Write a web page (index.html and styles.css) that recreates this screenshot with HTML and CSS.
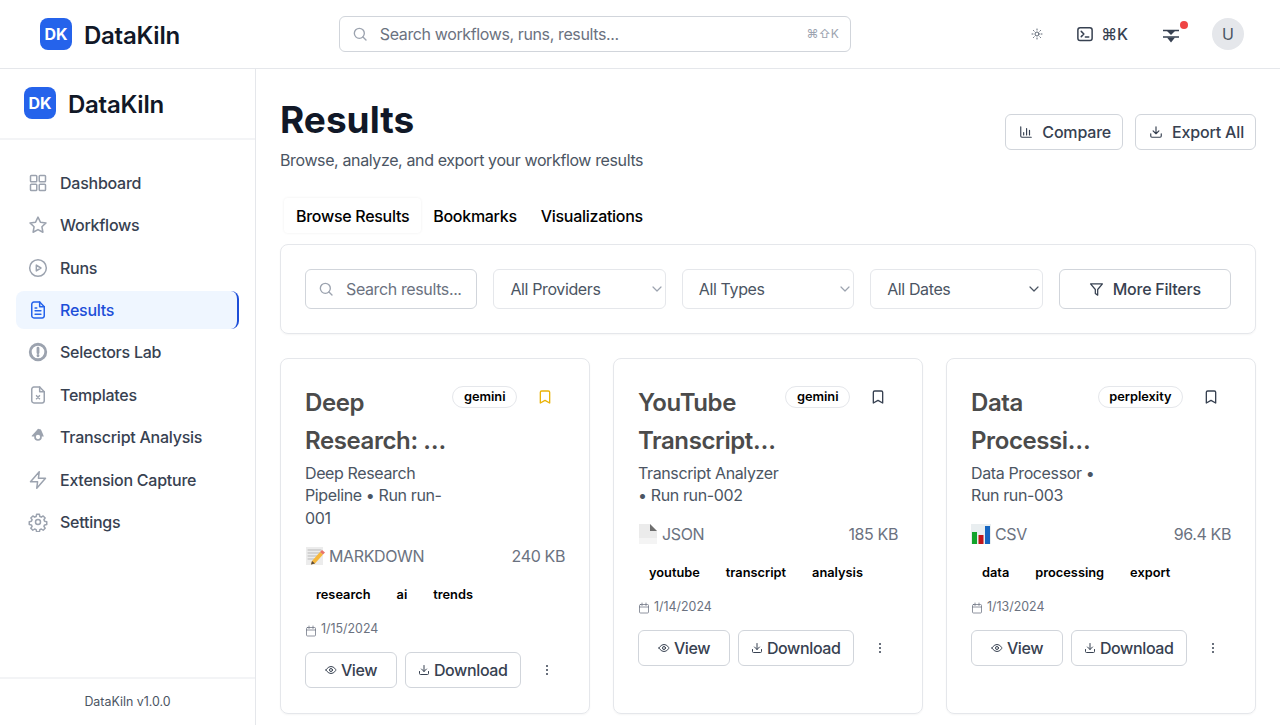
FILE: index.html
```html
<!DOCTYPE html>
<html lang="en">
<head>
<meta charset="utf-8">
<title>DataKiln Results</title>
<link rel="stylesheet" href="styles.css">
</head>
<body>
<header class="topbar">
  <div class="brand topbar-brand"><span class="logo">DK</span><span class="brand-name">DataKiln</span></div>
  <div class="global-search">
    <svg class="ico16 search-ico" viewBox="0 0 24 24"><circle cx="11" cy="11" r="7.5"/><path d="M21 21l-4.6-4.6"/></svg>
    <span class="global-placeholder">Search workflows, runs, results...</span>
    <span class="kbd">⌘⇧K</span>
  </div>
  <div class="top-actions">
    <button class="icon-btn sun" aria-label="Theme">
      <svg viewBox="0 0 24 24" class="ico12"><circle cx="12" cy="12" r="4"/><path d="M12 2v2M12 20v2M4.9 4.9l1.4 1.4M17.7 17.7l1.4 1.4M2 12h2M20 12h2M4.9 19.1l1.4-1.4M17.7 6.3l1.4-1.4"/></svg>
    </button>
    <button class="cmd-btn" aria-label="Command">
      <svg viewBox="0 0 24 24" class="ico18"><rect x="2.5" y="3.5" width="19" height="17" rx="3"/><path d="M7 8.5l3.5 3.5L7 15.5M12.5 16H17"/></svg>
      <span>⌘K</span>
    </button>
    <button class="icon-btn notif" aria-label="Notifications">
      <svg viewBox="0 0 16 14" class="notif-ico"><path class="notif-line" d="M0 1.5h16M0 8h16"/><path class="notif-fill" d="M4 2h8L8 6zM4 8.500h8L8 13.500z"/></svg>
      <span class="dot"></span>
    </button>
    <span class="avatar">U</span>
  </div>
</header>

<div class="shell">
  <aside class="sidebar">
    <div class="brand side-brand"><span class="logo">DK</span><span class="brand-name">DataKiln</span></div>
    <nav class="nav">
      <a class="nav-item"><svg class="nav-ico" viewBox="0 0 24 24"><rect x="3" y="3" width="7.5" height="7.5" rx="1"/><rect x="13.5" y="3" width="7.5" height="7.5" rx="1"/><rect x="3" y="13.5" width="7.5" height="7.5" rx="1"/><rect x="13.5" y="13.5" width="7.5" height="7.5" rx="1"/></svg>Dashboard</a>
      <a class="nav-item"><svg class="nav-ico" viewBox="0 0 24 24"><path d="M12 2.500l2.900 6.100 6.700.9-4.900 4.600 1.200 6.600-5.900-3.200-5.900 3.200 1.200-6.600-4.900-4.600 6.700-.9z"/></svg>Workflows</a>
      <a class="nav-item"><svg class="nav-ico" viewBox="0 0 24 24"><circle cx="12" cy="12" r="10"/><path d="M10 8.500l5.500 3.500-5.500 3.500z"/></svg>Runs</a>
      <a class="nav-item active"><svg class="nav-ico" viewBox="0 0 24 24"><path d="M14 2.500H7a2.500 2.500 0 0 0-2.500 2.500v14A2.500 2.500 0 0 0 7 21.500h10a2.500 2.500 0 0 0 2.500-2.500V8z"/><path d="M14 2.500V8h5.500M8.500 9.500h2M8.500 13h7M8.500 17h7"/></svg>Results</a>
      <a class="nav-item"><svg class="nav-ico heavy" viewBox="0 0 24 24"><circle cx="12" cy="12" r="9.300"/><path d="M12 7.500v5.500M12 16.200v.4"/></svg>Selectors Lab</a>
      <a class="nav-item"><svg class="nav-ico" viewBox="0 0 24 24"><path d="M14 2.500H7a2.500 2.500 0 0 0-2.500 2.500v14A2.500 2.500 0 0 0 7 21.500h10a2.500 2.500 0 0 0 2.500-2.500V8z"/><path d="M14 2.500V8h5.500M10.200 12.800l3.600 3.600M13.800 12.800l-3.600 3.600"/></svg>Templates</a>
      <a class="nav-item"><svg class="nav-ico blob" viewBox="0 0 24 24"><path class="blob-top" d="M4.500 10.500L10 4.500 12 2l3.500 1L17.500 7.500l1.500 4H4.500z"/><circle cx="12" cy="12" r="3.600"/></svg>Transcript Analysis</a>
      <a class="nav-item"><svg class="nav-ico" viewBox="0 0 24 24"><path d="M13.500 2L3 14h8.500l-1 8L21 10h-8.500z"/></svg>Extension Capture</a>
      <a class="nav-item"><svg class="nav-ico" viewBox="0 0 24 24"><circle cx="12" cy="12" r="3"/><path d="M10.300 2.800h3.400l.5 2.600 1.800.8 2.200-1.500 2.400 2.400-1.500 2.200.8 1.800 2.600.5v3.400l-2.600.5-.8 1.800 1.500 2.200-2.400 2.400-2.200-1.500-1.800.8-.5 2.600h-3.400l-.5-2.600-1.800-.8-2.200 1.500-2.400-2.400 1.500-2.200-.8-1.800-2.600-.5v-3.400l2.600-.5.8-1.800-1.500-2.200 2.400-2.400 2.200 1.500 1.800-.8z"/></svg>Settings</a>
    </nav>
    <div class="side-foot">DataKiln v1.0.0</div>
  </aside>

  <main class="main">
    <div class="page-head">
      <div>
        <h1 class="page-title">Results</h1>
        <p class="page-sub">Browse, analyze, and export your workflow results</p>
      </div>
      <div class="page-actions">
        <button class="btn btn-head"><svg class="ico14" viewBox="0 0 24 24"><path d="M3 3v16a2 2 0 0 0 2 2h16M8 17v-4M13 17V6M18 17V9"/></svg>Compare</button>
        <button class="btn btn-head"><svg class="ico14" viewBox="0 0 24 24"><path d="M21 15v4a2 2 0 0 1-2 2H5a2 2 0 0 1-2-2v-4M7 10l5 5 5-5M12 15V3"/></svg>Export All</button>
      </div>
    </div>

    <div class="tabs">
      <span class="tab tab-on">Browse Results</span>
      <span class="tab">Bookmarks</span>
      <span class="tab">Visualizations</span>
    </div>

    <section class="filters">
      <div class="filter-search">
        <svg class="ico16 search-ico" viewBox="0 0 24 24"><circle cx="11" cy="11" r="7.5"/><path d="M21 21l-4.6-4.6"/></svg>
        <span class="filter-placeholder">Search results...</span>
      </div>
      <div class="select"><span>All Providers</span><svg class="chev" viewBox="0 0 10 6"><path d="M1 1l4 4 4-4"/></svg></div>
      <div class="select"><span>All Types</span><svg class="chev" viewBox="0 0 10 6"><path d="M1 1l4 4 4-4"/></svg></div>
      <div class="select"><span>All Dates</span><svg class="chev chev-dark" viewBox="0 0 10 6"><path d="M1 1l4 4 4-4"/></svg></div>
      <button class="btn btn-filter"><svg class="ico15" viewBox="0 0 24 24"><path d="M21.5 3h-19l7.600 9v6.500l3.800 2.500v-9z"/></svg>More Filters</button>
    </section>

    <section class="cards">
      <article class="card">
        <div class="card-head">
          <div class="card-info">
            <h2 class="card-title">Deep Research: …</h2>
            <p class="card-desc">Deep Research Pipeline • Run run-001</p>
          </div>
          <div class="card-side">
            <span class="pill">gemini</span>
            <button class="mark mark-on" aria-label="Bookmark"><svg viewBox="0 0 24 24" class="ico16"><path d="M19 21l-7-4-7 4V5a2 2 0 0 1 2-2h10a2 2 0 0 1 2 2z"/></svg></button>
          </div>
        </div>
        <div class="meta">
          <span class="meta-type"><svg class="emoji" viewBox="0 0 20 20"><rect x="1" y="1" width="17" height="18" fill="#ececec"/><path d="M3 4h13M3 7h13M3 10h10M3 13h7" stroke="#b9b9b9" stroke-width="1" fill="none"/><path d="M7 15L15 6l3 2.500-8 9-4 1z" fill="#f6b73c"/><path d="M15 6l2-2 3 2.500-2 2z" fill="#e8746a"/><path d="M7 15l-1 3.500 4-1z" fill="#5b4a3a"/></svg>MARKDOWN</span>
          <span>240 KB</span>
        </div>
        <div class="tags"><span class="tag">research</span><span class="tag">ai</span><span class="tag">trends</span></div>
        <div class="date"><svg class="ico12" viewBox="0 0 24 24"><rect x="3" y="5" width="18" height="17" rx="2"/><path d="M8 2v5M16 2v5M3 10h18"/></svg>1/15/2024</div>
        <div class="card-actions">
          <button class="btn btn-view"><svg class="ico12" viewBox="0 0 24 24"><path d="M2 12s3.600-7 10-7 10 7 10 7-3.600 7-10 7-10-7-10-7z"/><circle cx="12" cy="12" r="3"/></svg>View</button>
          <button class="btn btn-dl"><svg class="ico12" viewBox="0 0 24 24"><path d="M21 15v4a2 2 0 0 1-2 2H5a2 2 0 0 1-2-2v-4M7 10l5 5 5-5M12 15V3"/></svg>Download</button>
          <button class="kebab" aria-label="More"><svg viewBox="0 0 4 12" class="kebab-ico"><circle cx="2" cy="2" r="1"/><circle cx="2" cy="6" r="1"/><circle cx="2" cy="10" r="1"/></svg></button>
        </div>
      </article>

      <article class="card">
        <div class="card-head">
          <div class="card-info">
            <h2 class="card-title">YouTube Transcript…</h2>
            <p class="card-desc">Transcript Analyzer • Run run-002</p>
          </div>
          <div class="card-side">
            <span class="pill">gemini</span>
            <button class="mark" aria-label="Bookmark"><svg viewBox="0 0 24 24" class="ico16"><path d="M19 21l-7-4-7 4V5a2 2 0 0 1 2-2h10a2 2 0 0 1 2 2z"/></svg></button>
          </div>
        </div>
        <div class="meta">
          <span class="meta-type"><svg class="emoji" viewBox="0 0 20 20"><path d="M1 0h11l7 7v13H1z" fill="#ebebeb"/><path d="M12 0l7 7h-7z" fill="#6f6f6f"/><path d="M1 14h18v6H1z" fill="#f4f4f4"/></svg>JSON</span>
          <span>185 KB</span>
        </div>
        <div class="tags"><span class="tag">youtube</span><span class="tag">transcript</span><span class="tag">analysis</span></div>
        <div class="date"><svg class="ico12" viewBox="0 0 24 24"><rect x="3" y="5" width="18" height="17" rx="2"/><path d="M8 2v5M16 2v5M3 10h18"/></svg>1/14/2024</div>
        <div class="card-actions">
          <button class="btn btn-view"><svg class="ico12" viewBox="0 0 24 24"><path d="M2 12s3.600-7 10-7 10 7 10 7-3.600 7-10 7-10-7-10-7z"/><circle cx="12" cy="12" r="3"/></svg>View</button>
          <button class="btn btn-dl"><svg class="ico12" viewBox="0 0 24 24"><path d="M21 15v4a2 2 0 0 1-2 2H5a2 2 0 0 1-2-2v-4M7 10l5 5 5-5M12 15V3"/></svg>Download</button>
          <button class="kebab" aria-label="More"><svg viewBox="0 0 4 12" class="kebab-ico"><circle cx="2" cy="2" r="1"/><circle cx="2" cy="6" r="1"/><circle cx="2" cy="10" r="1"/></svg></button>
        </div>
      </article>

      <article class="card">
        <div class="card-head">
          <div class="card-info">
            <h2 class="card-title">Data Processi…</h2>
            <p class="card-desc">Data Processor • Run run-003</p>
          </div>
          <div class="card-side">
            <span class="pill">perplexity</span>
            <button class="mark" aria-label="Bookmark"><svg viewBox="0 0 24 24" class="ico16"><path d="M19 21l-7-4-7 4V5a2 2 0 0 1 2-2h10a2 2 0 0 1 2 2z"/></svg></button>
          </div>
        </div>
        <div class="meta">
          <span class="meta-type"><svg class="emoji" viewBox="0 0 20 20"><rect x="0" y="0" width="20" height="20" fill="#e9eef0"/><rect x="1" y="8" width="5" height="12" fill="#12a32b"/><rect x="7.5" y="11" width="5" height="9" fill="#c0141a"/><rect x="14" y="2" width="5" height="18" fill="#1565c0"/></svg>CSV</span>
          <span>96.4 KB</span>
        </div>
        <div class="tags"><span class="tag">data</span><span class="tag">processing</span><span class="tag">export</span></div>
        <div class="date"><svg class="ico12" viewBox="0 0 24 24"><rect x="3" y="5" width="18" height="17" rx="2"/><path d="M8 2v5M16 2v5M3 10h18"/></svg>1/13/2024</div>
        <div class="card-actions">
          <button class="btn btn-view"><svg class="ico12" viewBox="0 0 24 24"><path d="M2 12s3.600-7 10-7 10 7 10 7-3.600 7-10 7-10-7-10-7z"/><circle cx="12" cy="12" r="3"/></svg>View</button>
          <button class="btn btn-dl"><svg class="ico12" viewBox="0 0 24 24"><path d="M21 15v4a2 2 0 0 1-2 2H5a2 2 0 0 1-2-2v-4M7 10l5 5 5-5M12 15V3"/></svg>Download</button>
          <button class="kebab" aria-label="More"><svg viewBox="0 0 4 12" class="kebab-ico"><circle cx="2" cy="2" r="1"/><circle cx="2" cy="6" r="1"/><circle cx="2" cy="10" r="1"/></svg></button>
        </div>
      </article>
    </section>
  </main>
</div>
</body>
</html>
```
FILE: styles.css
```css
* { box-sizing: border-box; }
html, body { height: 100%; }
body {
  margin: 0;
  height: 725px;
  overflow: hidden;
  background: #fff;
  color: #374151;
  font-family: Inter, "Liberation Sans", "DejaVu Sans", sans-serif;
  font-size: 16px;
  line-height: 24px;
  letter-spacing: -0.38px;
}
svg { fill: none; stroke: currentColor; stroke-width: 2; stroke-linecap: round; stroke-linejoin: round; flex: none; display: block; }
button { font: inherit; letter-spacing: inherit; color: inherit; background: none; border: 0; padding: 0; cursor: pointer; }
h1, h2, p { margin: 0; }

.ico12 { width: 12px; height: 12px; }
.ico14 { width: 14px; height: 14px; }
.ico15 { width: 15px; height: 15px; }
.ico16 { width: 16px; height: 16px; }
.ico18 { width: 18px; height: 18px; }

.topbar {
  height: 69px;
  border-bottom: 1px solid #e5e7eb;
  display: flex;
  align-items: center;
  padding: 0 36px 0 40px;
}
.brand { display: flex; align-items: center; gap: 12px; }
.logo {
  width: 32px; height: 32px;
  background: #2563eb;
  color: #fff;
  border-radius: 8px;
  display: flex; align-items: center; justify-content: center;
  font-weight: 700;
  font-size: 16px;
  letter-spacing: -0.1px;
}
.brand-name { font-size: 24px; font-weight: 600; color: #111827; line-height: 32px; padding-top: 4px; letter-spacing: -0.25px; }
.global-search {
  width: 512px;
  height: 36px;
  margin-left: 159px;
  border: 1px solid #d1d5db;
  border-radius: 6px;
  display: flex;
  align-items: center;
  padding: 0 11px 0 12px;
  gap: 12px;
}
.search-ico { color: #9ca3af; }
.global-placeholder { flex: 1; color: #6b7280; }
.kbd { font-size: 12px; color: #9ca3af; letter-spacing: 0; }
.top-actions { margin-left: auto; display: flex; align-items: center; }
.icon-btn { display: flex; align-items: center; justify-content: center; position: relative; }
.sun { width: 36px; height: 36px; color: #4b5563; margin-right: 21px; }
.sun svg { stroke-width: 1.8; }
.cmd-btn { display: flex; align-items: center; gap: 7px; font-weight: 500; color: #374151; margin-right: 34px; letter-spacing: 0; }
.notif { width: 18px; height: 24px; margin-right: 32px; }
.notif-ico { width: 16px; height: 14px; margin-top: 3px; }
.notif-line { stroke: #374151; stroke-width: 1.5; stroke-linecap: butt; }
.notif-fill { fill: #374151; stroke: none; }
.dot { position: absolute; top: -1px; right: -8px; width: 8px; height: 8px; background: #ef4444; border-radius: 50%; }
.avatar { width: 32px; height: 32px; border-radius: 50%; background: #e5e7eb; color: #4b5563; display: flex; align-items: center; justify-content: center; letter-spacing: 0; }

.shell { display: flex; height: 656px; }
.sidebar {
  width: 256px;
  border-right: 1px solid #e5e7eb;
  display: flex;
  flex-direction: column;
  flex: none;
}
.side-brand { padding: 18px 24px 19px; border-bottom: 2px solid #f3f4f6; height: 71px; }
.nav { flex: 1; padding: 23.9px 16px 0; display: flex; flex-direction: column; gap: 4.4px; }
.nav-item {
  height: 38px;
  display: flex;
  align-items: center;
  gap: 12px;
  padding: 0 12px;
  border-radius: 8px;
  color: #374151;
  font-weight: 500;
  letter-spacing: -0.25px;
}
.nav-ico { width: 20px; height: 20px; color: #9ca3af; stroke-width: 1.8; }
.nav-ico.heavy { stroke-width: 3.4; }
.nav-ico.blob { stroke-width: 2; }
.blob-top { fill: #9ca3af; stroke: none; }
.blob circle { fill: #fff; }
.nav-item.active { background: #eff6ff; color: #1d4ed8; border-right: 2px solid #1d4ed8; }
.active .nav-ico { color: #2563eb; }
.side-foot {
  height: 48px;
  border-top: 2px solid #f3f4f6;
  display: flex; align-items: center; justify-content: center;
  font-size: 12.4px;
  letter-spacing: 0;
  color: #4b5563;
}

.main { flex: 1; min-width: 0; padding: 30px 24px 0; }
.page-head { display: flex; justify-content: space-between; align-items: flex-start; }
.page-title { font-size: 37px; line-height: 40px; font-weight: 700; color: #111827; letter-spacing: 0; padding-top: 1px; }
.page-sub { margin-top: 8px; color: #4b5563; }
.page-actions { display: flex; gap: 12px; margin-top: 15px; }
.btn {
  height: 36px;
  padding: 0 12px;
  border: 1px solid #d1d5db;
  border-radius: 6px;
  background: #fff;
  display: inline-flex;
  align-items: center;
  justify-content: center;
  gap: 8px;
  font-weight: 500;
  color: #374151;
  white-space: nowrap;
  letter-spacing: -0.25px;
}
.btn-head { padding: 0 11px 0 13px; gap: 9px; letter-spacing: -0.18px; }

.tabs { display: flex; margin-top: 22px; padding: 4px; height: 44px; color: #000; letter-spacing: -0.29px; }
.tab { padding: 6px 12px; height: 35px; font-weight: 500; }
.tab-on { background: #fff; border-radius: 4px; box-shadow: 0 0 3px rgba(0, 0, 0, .07); }

.filters {
  margin-top: 6px;
  border: 1px solid #e5e7eb;
  border-radius: 8px;
  padding: 24px;
  display: grid;
  grid-template-columns: repeat(5, minmax(0, 1fr));
  gap: 16px;
  box-shadow: 0 1px 2px rgba(0, 0, 0, .04);
}
.filter-search {
  height: 40px;
  border: 1px solid #d1d5db;
  border-radius: 6px;
  display: flex;
  align-items: center;
  gap: 12px;
  padding: 0 12px;
  min-width: 0;
}
.filter-placeholder { color: #6b7280; white-space: nowrap; }
.select {
  height: 40px;
  border: 1px solid #e5e7eb;
  border-radius: 6px;
  display: flex;
  align-items: center;
  justify-content: space-between;
  padding: 0 3px 0 16px;
  color: #4b5563;
}
.chev { width: 10px; height: 6px; color: #9ca3af; stroke-width: 1.2; }
.chev-dark { color: #4b5563; }
.btn-filter { height: 40px; width: 100%; gap: 9px; }

.cards { margin-top: 24px; display: grid; grid-template-columns: repeat(3, minmax(0, 1fr)); gap: 23px; }
.card {
  height: 356px;
  border: 1px solid #e5e7eb;
  border-radius: 8px;
  padding: 24px;
  box-shadow: 0 1px 2px rgba(0, 0, 0, .04);
}
.card-head { display: flex; align-items: flex-start; }
.card-info { flex: 1; min-width: 0; }
.card-title { font-size: 24px; line-height: 38px; font-weight: 600; color: #4b4b4b; padding-top: 1px; letter-spacing: -0.4px; }
.card-desc { margin-top: 2px; line-height: 22.4px; color: #4b5563; }
.card-side { display: flex; align-items: center; gap: 8px; height: 28px; flex: none; }
.pill {
  border: 1px solid #e5e7eb;
  border-radius: 999px;
  padding: 2px 10.5px;
  font-size: 12.8px;
  line-height: 16px;
  font-weight: 600;
  letter-spacing: 0;
  color: #000;
}
.mark { width: 40px; height: 28px; display: flex; align-items: center; justify-content: center; color: #374151; }
.mark-on { color: #eab308; }
.meta { margin-top: 15px; display: flex; justify-content: space-between; color: #6b7280; }
.meta-type { display: flex; align-items: center; gap: 4px; }
.emoji { width: 20px; height: 20px; stroke: none; }
.tags { margin-top: 16px; display: flex; gap: 4px; }
.tag {
  border: 1px solid transparent;
  border-radius: 999px;
  padding: 2px 10px;
  font-size: 12.8px;
  line-height: 16px;
  font-weight: 600;
  letter-spacing: 0;
  color: #000;
}
.date { margin-top: 13px; display: flex; align-items: center; gap: 4px; font-size: 12.4px; line-height: 20px; color: #6b7280; letter-spacing: 0; }
.date svg { margin-top: 3px; color: #6b7280; stroke-width: 1.5; }
.card-actions { margin-top: 13px; display: flex; gap: 8px; }
.btn-view { flex: none; width: 92px; gap: 4px; letter-spacing: -0.4px; }
.btn-dl { flex: none; width: 115.5px; gap: 4px; letter-spacing: -0.37px; }
.kebab { width: 38px; height: 36px; display: flex; align-items: center; justify-content: center; color: #374151; }
.kebab-ico { width: 4px; height: 12px; fill: currentColor; stroke: none; }
```
